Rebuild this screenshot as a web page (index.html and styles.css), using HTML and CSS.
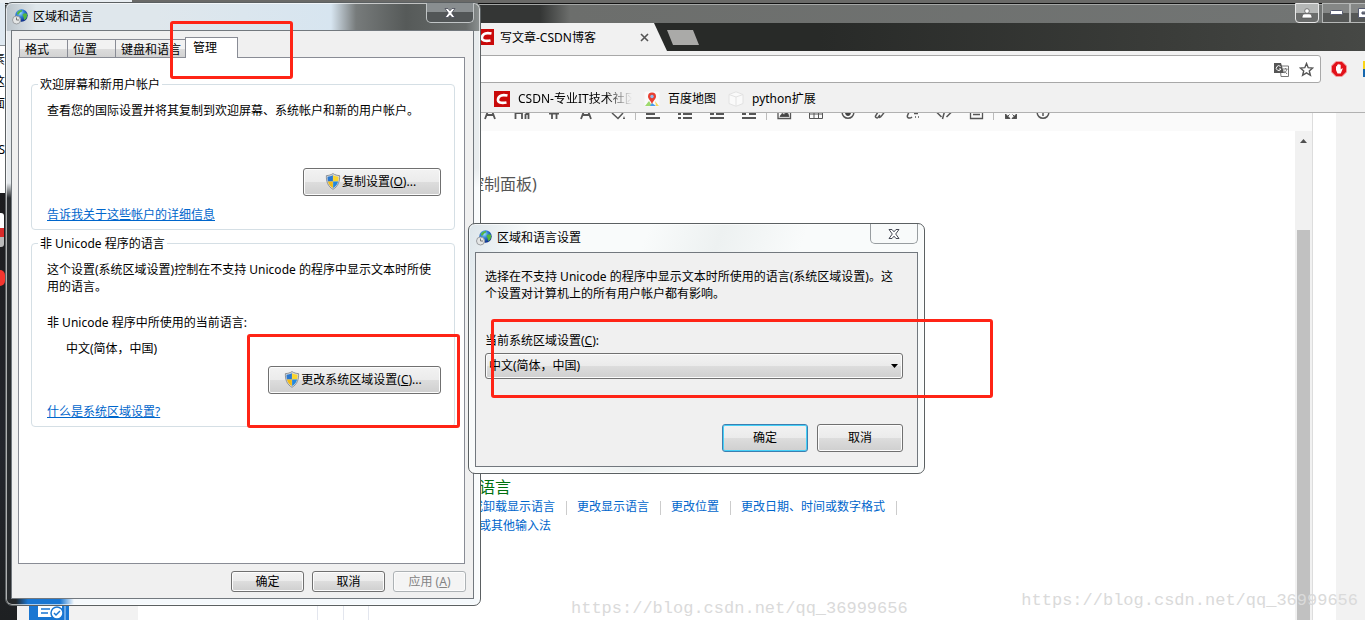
FILE: index.html
```html
<!DOCTYPE html>
<html lang="zh-CN">
<head>
<meta charset="utf-8">
<title>区域和语言</title>
<link rel="stylesheet" href="styles.css">
</head>
<body>
<svg class="defs" width="0" height="0" aria-hidden="true">
  <defs>
    <radialGradient id="ball" cx="40%" cy="30%" r="70%">
      <stop offset="0" stop-color="#9fe0ff"/><stop offset=".45" stop-color="#2f7fd6"/><stop offset="1" stop-color="#0b2a86"/>
    </radialGradient>
    <symbol id="globe" viewBox="0 0 16 16">
      <circle cx="9.500" cy="6.500" r="6.200" fill="url(#ball)"/>
      <path d="M5 4c1-2 3-3 5-3 .5 1-.5 2-1.500 2.300S7.500 5 6.500 5.500 5 5 5 4zM11 5c1.500-1 3-1 4 0 .5 2-.5 5-2.500 6-1-1-.5-2-1-3S10 6 11 5z" fill="#52b640"/>
      <circle cx="4.500" cy="11" r="4" fill="#e4e6e6" stroke="#9b9fa2"/>
      <path d="M4.500 8.500V11H7" fill="none" stroke="#777"/>
    </symbol>
    <symbol id="shield" viewBox="0 0 16 17">
      <path d="M8 .6c2 1.300 4.200 1.900 6.600 2 .3 6-1.600 11-6.600 13.700C3 13.600 1.100 8.600 1.400 2.600 3.800 2.500 6 1.900 8 .6z" fill="#d8dde0" stroke="#84898d" stroke-width=".9"/>
      <path d="M7.900 2.300v6.200H2.900c-.3-1.500-.4-3-.4-4.700 2-.1 3.800-.6 5.400-1.500z" fill="#2b78cf"/>
      <path d="M8.100 2.300c1.600.9 3.400 1.400 5.400 1.500 0 1.700-.1 3.200-.4 4.700h-5z" fill="#fbd52c"/>
      <path d="M2.900 8.500h5v6.400c-2.700-1.500-4.300-3.700-5-6.400z" fill="#f3bb13"/>
      <path d="M13.100 8.500h-5v6.400c2.700-1.500 4.300-3.700 5-6.400z" fill="#2388dd"/>
    </symbol>
    <symbol id="csdn" viewBox="0 0 16 16">
      <path d="M0 0h16v16H0z" fill="#c90a0a"/>
      <path d="M13.500 4.600C9 3.600 4.700 4 4 8.200c-.5 3.300 3 4.300 8.500 3.300" fill="none" stroke="#fff" stroke-width="2.600"/>
    </symbol>
  </defs>
</svg>

<main class="desktop">
  <section class="browser">
    <header class="titlebar">
      <div class="controls">
        <button class="ctl user" aria-label="用户"><svg width="12" height="11" viewBox="0 0 12 11"><circle cx="6" cy="3" r="2.300" fill="#fff" stroke="#555" stroke-width=".7"/><path d="M1 10c0-3 1-4.200 3-4.200h4c2 0 3 1.200 3 4.200z" fill="#fff" stroke="#555" stroke-width=".7"/></svg></button>
        <button class="ctl" aria-label="最小化"><svg width="13" height="6" viewBox="0 0 13 6"><rect x=".5" y=".5" width="12" height="4" rx="1" fill="#fff" stroke="#555a70"/></svg></button>
        <button class="ctl" aria-label="最大化"><svg width="13" height="10" viewBox="0 0 13 10"><path d="M.5.5h12v9H.5zM4 4v2h5V4z" fill="#fff" fill-rule="evenodd" stroke="#555a70"/></svg></button>
      </div>
    </header>
    <div class="tabs-row">
      <div class="page-tab">
        <svg width="16" height="16"><use href="#csdn"/></svg>
        <span>写文章-CSDN博客</span>
        <button class="tab-close" aria-label="关闭标签页"><svg width="9" height="9" viewBox="0 0 9 9"><path d="M1 1l7 7M8 1L1 8" stroke="#555" stroke-width="1.600"/></svg></button>
      </div>
      <button class="new-tab" aria-label="新标签页"></button>
    </div>
    <div class="address-row">
      <div class="address">
        <input class="url" type="text" aria-label="网址">
        <svg width="15" height="15" viewBox="0 0 15 15"><path d="M6 4h8.500v10.500H7z" fill="#fff" stroke="#777"/><path d="M0 1h7l3 10H0z" fill="#555"/><path d="M6.500 4.500A2.400 2.400 0 1 0 7 7H5" fill="none" stroke="#fff"/><path d="M9 7h4.500M11.500 6v1M13 7c-.5 2-1.500 3-3 4M10 8.500l3 3.500" fill="none" stroke="#777"/></svg>
        <svg width="15" height="15" viewBox="0 0 15 15"><path d="M7.500 1.500l1.700 4.200 4.500.3-3.400 2.900 1.100 4.400-3.900-2.400-3.900 2.400 1.100-4.400L1.300 6l4.500-.3z" fill="none" stroke="#555" stroke-width="1.400"/></svg>
      </div>
      <div class="extensions">
        <svg width="16" height="16" viewBox="0 0 16 16"><path d="M5 .5h6L15.500 5v6L11 15.500H5L.5 11V5z" fill="#e2121a" stroke="#f39a9a"/><path d="M5 9V5.500q.6-.8 1.100 0V4q.6-.8 1.200 0v-.800q.6-.8 1.200 0V4q.6-.8 1.200 0v4.500l1.500-1.200q1 .2.300 1L9.800 12.500H6.500z" fill="#fff"/></svg>
        <svg width="16" height="16" viewBox="0 0 16 16"><path d="M0 0h16v8H0z" fill="#f9d418"/><path d="M0 8h16v8H0z" fill="#1667ae"/></svg>
      </div>
    </div>
    <nav class="bookmarks">
      <a href="#" class="bookmark"><svg width="16" height="16"><use href="#csdn"/></svg><span class="fade">CSDN-专业IT技术社区</span></a>
      <a href="#" class="bookmark"><svg width="16" height="16" viewBox="0 0 16 16"><rect x=".5" y=".5" width="15" height="15" rx="2" fill="#fafafa"/><path d="M1 15l4-5 3 5z" fill="#9dd96c"/><path d="M6 15l2-3 4 3z" fill="#459bee"/><path d="M11 10l4 5h-3z" fill="#f5d85e"/><path d="M8 13C7 10 4 8 4 5.500a4 4 0 0 1 8 0C12 8 9 10 8 13z" fill="#e83f32"/><circle cx="8" cy="5.500" r="1.700" fill="#8fc1f1"/></svg><span>百度地图</span></a>
      <a href="#" class="bookmark"><svg width="16" height="16" viewBox="0 0 16 16"><path d="M8 .8l7 2.700v9L8 15.300 1 12.500v-9z" fill="#fafafa" stroke="#e2e2e2"/><path d="M1 3.500l7 2.500 7-2.500M8 6v9" fill="none" stroke="#e2e2e2"/></svg><span>python扩展</span></a>
    </nav>
    <div class="viewport">
      <aside class="rail">
        <div class="rail-light"></div>
        <div class="rail-dark"><i class="rail-card"></i><i class="rail-dot"></i></div>
      </aside>
      <aside class="sidebar">
        <svg width="40" height="34" viewBox="0 0 40 34"><path d="M0 0h40v34H0z" fill="#1976d2"/><path d="M9 0h24v31H9z" fill="#fff"/><path d="M12 19h9M12 23h9M12 27h7" stroke="#1976d2" stroke-width="1.500"/><circle cx="28" cy="27" r="6" fill="#fff" stroke="#1976d2" stroke-width="1.500"/><path d="M25 27l2 2 4-4" fill="none" stroke="#1976d2" stroke-width="1.500"/><path d="M36 0v34" stroke="#6aa9e8" stroke-width="2"/></svg>
      </aside>
      <div class="drafts"><i></i><i></i><i></i></div>
      <div class="editor">
        <div class="editor-tools">
          <span class="tool"><svg viewBox="0 0 16 16"><path d="M3 15L7.500 3h1L13 15M5 11h6"/></svg></span>
          <span class="tool"><svg viewBox="0 0 16 16"><path d="M1.500 3v12M8 3v12M1.500 9H8M11.500 15V10M14.500 15v-5h-3"/></svg></span>
          <span class="tool"><svg viewBox="0 0 16 16"><path d="M3 9.500h10M6 9.500V15M10.500 7v8"/></svg></span>
          <span class="tool"><svg viewBox="0 0 16 16"><path d="M3 15L7.500 3h1L13 15M5 11h6"/></svg></span>
          <span class="tool"><svg viewBox="0 0 16 16"><path d="M2 9l6 5.500L13 9" stroke-width="1.500"/><path d="M14 12l-1 3h2z" fill="#444" stroke="none"/></svg></span>
          <i class="sep"></i>
          <span class="tool"><svg viewBox="0 0 16 16"><path d="M1 6h14M1 10h9M1 14h14"/></svg></span>
          <span class="tool"><svg viewBox="0 0 16 16"><path d="M1 10h3M6 10h9M1 14h3M6 14h9"/></svg></span>
          <span class="tool"><svg viewBox="0 0 16 16"><path d="M1 10h4M7 10h8M1 14h14"/></svg></span>
          <span class="tool"><svg viewBox="0 0 16 16"><path d="M1 14h14M8 10h7M1 10h4"/></svg></span>
          <i class="sep"></i>
          <span class="tool"><svg viewBox="0 0 16 16"><path d="M2 4h12.500v10.500H2z" stroke-width="1.300"/><path d="M4 12.500l2-3 2 1 3-3 2 5z" fill="#444" stroke-width="1"/></svg></span>
          <span class="tool"><svg viewBox="0 0 16 16"><path d="M1.500 4h13v10.500h-13zM1.500 10h13M6 4v10M10.500 4v10" stroke-width="1"/></svg></span>
          <span class="tool"><svg viewBox="0 0 16 16"><circle cx="8" cy="8.500" r="5.800" stroke-width="1.500"/><path d="M5 9h6c-.5 2-1.500 3-3 3S5.500 11 5 9z" fill="#444" stroke="none"/></svg></span>
          <span class="tool"><svg viewBox="0 0 16 16"><path d="M8 11l-2 2.500c-1 1-3 0-2.500-1.500L6 8M7 13.500c2 0 3-2 5-5" stroke-width="1.500"/></svg></span>
          <span class="tool"><svg viewBox="0 0 16 16"><path d="M8 13c-2 2-5.500 1-4.500-1.500L5 8M10 9.500h4M11 13h1M14 13h1" stroke-width="1.500"/></svg></span>
          <span class="tool"><svg viewBox="0 0 16 16"><path d="M5.500 5L1.500 9l4 4M10.500 5l4 4-4 4M9.500 4l-3 11" stroke-width="1.500"/></svg></span>
          <span class="tool"><svg viewBox="0 0 16 16"><path d="M2.500 2h12v12.500h-12zM5 10.500h7" stroke-width="1.300"/></svg></span>
          <i class="sep"></i>
          <span class="tool"><svg viewBox="0 0 16 16"><path d="M2.500 10v4.500H7zM13.500 10v4.500H9zM2.500 14.500l4-4M13.500 14.500l-4-4" fill="#444" stroke-width="1"/></svg></span>
          <span class="tool"><svg viewBox="0 0 16 16"><circle cx="8" cy="8.500" r="5.800" stroke-width="1.500"/><path d="M8 6v6" stroke-width="1.500"/></svg></span>
        </div>
        <div class="editor-body">
          <article class="article">
            <p class="crumb">控制面板)</p>
            <h2 class="topic">语言</h2>
            <div class="links"><a href="#">或卸载显示语言</a><a href="#">更改显示语言</a><a href="#">更改位置</a><a href="#">更改日期、时间或数字格式</a></div>
            <div class="links second"><a href="#">或其他输入法</a></div>
          </article>
          <div class="scroll"><svg width="7" height="4" viewBox="0 0 7 4"><path d="M0 4L3.500 0 7 4z" fill="#505050"/></svg><i class="thumb"></i></div>
        </div>
      </div>
      <div class="gutter"></div>
    </div>
  </section>

  <aside class="edge"><span>素</span><span>这</span><span>面</span><span class="code">S</span></aside>

  <section class="window region" aria-label="区域和语言">
    <header class="caption">
      <svg width="16" height="16"><use href="#globe"/></svg><h1>区域和语言</h1>
      <button class="close dark" aria-label="关闭"><svg width="12" height="10" viewBox="0 0 12 10"><path d="M1 .5h3l2 2.300L8 .5h3L7.700 5 11 9.500H8L6 7.200 4 9.500H1L4.300 5z" fill="#fff" stroke="#454854" stroke-width=".8"/></svg></button>
    </header>
    <div class="client">
      <div class="tabs" role="tablist">
        <button role="tab" class="tab">格式</button><button role="tab" class="tab">位置</button><button role="tab" class="tab wide">键盘和语言</button><button role="tab" class="tab active" aria-selected="true">管理</button>
      </div>
      <div class="panel">
        <fieldset class="group">
          <legend>欢迎屏幕和新用户帐户</legend>
          <p>查看您的国际设置并将其复制到欢迎屏幕、系统帐户和新的用户帐户。</p>
          <button class="btn action copy"><svg width="16" height="17"><use href="#shield"/></svg><span>复制设置(<u>O</u>)...</span></button>
          <a href="#" class="help">告诉我关于这些帐户的详细信息</a>
        </fieldset>
        <fieldset class="group">
          <legend>非 Unicode 程序的语言</legend>
          <p>这个设置(系统区域设置)控制在不支持 Unicode 的程序中显示文本时所使用的语言。</p>
          <p class="current">非 Unicode 程序中所使用的当前语言:</p>
          <p class="value">中文(简体，中国)</p>
          <button class="btn action change"><svg width="16" height="17"><use href="#shield"/></svg><span>更改系统区域设置(<u>C</u>)...</span></button>
          <a href="#" class="help">什么是系统区域设置?</a>
        </fieldset>
      </div>
      <footer class="footer"><button class="btn">确定</button><button class="btn">取消</button><button class="btn" disabled>应用 (<u>A</u>)</button></footer>
    </div>
  </section>

  <section class="window locale" aria-label="区域和语言设置">
    <header class="caption">
      <svg width="16" height="16"><use href="#globe"/></svg><h1>区域和语言设置</h1>
      <button class="close" aria-label="关闭"><svg width="12" height="10" viewBox="0 0 12 10"><path d="M1 .5h3l2 2.300L8 .5h3L7.700 5 11 9.500H8L6 7.200 4 9.500H1L4.300 5z" fill="#fff" stroke="#454854"/></svg></button>
    </header>
    <div class="client">
      <p>选择在不支持 Unicode 的程序中显示文本时所使用的语言(系统区域设置)。这个设置对计算机上的所有用户帐户都有影响。</p>
      <label for="locale">当前系统区域设置(<u>C</u>):</label>
      <div class="combo">
        <select id="locale"><option>中文(简体，中国)</option></select>
        <svg class="arrow" width="7" height="4" viewBox="0 0 7 4"><path d="M0 0h7L3.500 4z"/></svg>
      </div>
      <footer class="footer"><button class="btn primary">确定</button><button class="btn">取消</button></footer>
    </div>
  </section>

  <i class="mark mark-tab"></i>
  <i class="mark mark-change"></i>
  <i class="mark mark-combo"></i>
  <span class="watermark first">https://blog.csdn.net/qq_36999656</span>
  <span class="watermark last">https://blog.csdn.net/qq_36999656</span>
</main>
</body>
</html>
```
FILE: styles.css
```css
* { box-sizing: border-box; }
body { margin: 0; font: 12px/17px "Noto Sans", "Noto Sans CJK SC", sans-serif; color: #000; }
button, input, select { font: inherit; color: inherit; margin: 0; padding: 0; }
p, h1, h2 { margin: 0; font-size: 12px; font-weight: 400; }
a { color: #0066cc; }
svg { display: block; flex: none; }
i { display: block; }
.defs { position: absolute; }
.desktop { position: relative; height: 100vh; overflow: hidden; }

/* Browser in the background */
.browser { display: flex; flex-direction: column; height: 100%; background: #f1f1f1; }
.titlebar { display: flex; justify-content: flex-end; height: 23px; padding-top: 3px; background: linear-gradient(90deg, #e9eef2 132px, transparent 132px) top / 100% 3px no-repeat, linear-gradient(#6a6a68 0 3px, #111 3px 4px, #a5a7a6 4px 5px, transparent 5px), linear-gradient(90deg, #343635 0 540px, #6c6e6c 570px, #727574); }
.controls { display: flex; align-items: flex-start; margin-right: -13px; }
.ctl { display: grid; place-items: center; width: 28px; height: 20px; border: 1px solid #b5b7b6; background: linear-gradient(#858786 50%, #555756 50%); }
.ctl.user { width: 24px; margin-right: 3px; border-color: #e8e8e8; border-radius: 0 0 4px 4px; background: linear-gradient(#b5b7b6 50%, #6b6d6c 50%); }
.tabs-row { display: flex; height: 28px; padding-left: 470px; background: linear-gradient(90deg, #282a28 0 60%, #3a3c39 85%, #464845); }
.page-tab { display: flex; align-items: center; gap: 6px; width: 197px; padding: 0 18px 0 8px; background: #f1f1f1; clip-path: polygon(0 0, 184px 0, 100% 100%, 0 100%); }
.tab-close { margin-left: auto; border: 0; background: none; }
.new-tab { width: 32px; height: 15px; margin-top: 7px; border: 0; background: #aaaaa8; clip-path: polygon(0 0, 26px 0, 100% 100%, 6px 100%); }
.address-row { display: flex; align-items: center; gap: 10px; height: 36px; }
.address { display: flex; flex: 1; align-items: center; gap: 10px; height: 28px; padding-right: 6px; border: 1px solid #a8a8a8; border-radius: 3px; background: #fff; }
.url { flex: 1; height: 24px; border: 0; outline: 0; }
.extensions { display: flex; gap: 16px; width: 34px; overflow: hidden; }
.bookmarks { display: flex; align-items: center; gap: 12px; height: 26px; padding: 0 0 2px 494px; border-bottom: 1px solid #b1b1b1; }
.bookmark { display: flex; align-items: center; gap: 8px; height: 17px; color: #000; text-decoration: none; }
.fade { width: 114px; overflow: hidden; white-space: nowrap; -webkit-mask-image: linear-gradient(90deg, #000 88px, transparent); mask-image: linear-gradient(90deg, #000 88px, transparent); }
.viewport { display: flex; flex: 1; min-height: 0; }
.rail { display: flex; flex-direction: column; width: 17px; background: #fff; }
.rail-light { height: 80px; }
.rail-dark { flex: 1; padding-top: 20px; background: linear-gradient(#1c1c1e, #23252c 60%, #1e2022); }
.rail-card { width: 4px; height: 34px; border-radius: 0 3px 3px 0; background: linear-gradient(#fff 15px, #d92b2b 15px 24px, #bbb 24px); }
.rail-dot { width: 5px; height: 16px; margin-top: 23px; border-radius: 0 6px 6px 0; background: #f5352f; }
.edge { position: absolute; top: 3px; left: 0; display: flex; flex-direction: column; align-items: flex-end; width: 5px; height: 155px; padding-top: 46px; overflow: hidden; background: linear-gradient(#dfe9f1 42px, #8b9298 42px 43px, #fff 43px); }
.edge span { line-height: 22px; }
.edge .code { margin-top: 24px; }
.sidebar { display: flex; align-items: flex-end; width: 121px; padding-left: 12px; background: #f2f2f2; }
.drafts { display: flex; gap: 25px; width: 231px; padding-left: 179px; background: #fff; }
.drafts i { width: 1px; background: #e3e6ee; }
.editor { display: flex; flex: 1; flex-direction: column; min-width: 0; border-right: 1px solid #ddd; background: #fff; }
.editor-tools { display: flex; height: 18px; padding-left: 105px; overflow: hidden; background: #fafafa; }
.tool { width: 32px; }
.tool svg { width: 16px; height: 16px; margin: -9px auto 0; fill: none; stroke: #555; stroke-width: 1.8px; }
.sep { width: 1px; height: 7px; margin: 0 1px; background: #bbb; }
.editor-body { display: flex; flex: 1; min-height: 0; }
.article { flex: 1; padding: 42px 0 0 99px; }
.crumb { font-size: 16px; line-height: 22px; color: #555; }
.topic { margin: 282px 0 0 11px; font-size: 16px; line-height: 20px; color: #00700f; }
.links { display: flex; align-items: center; margin-left: 3px; line-height: 19px; }
.links.second { margin-left: 11px; }
.links a { text-decoration: none; white-space: nowrap; }
.links:not(.second) a::after { content: ""; display: inline-block; width: 1px; height: 14px; margin: 0 10px 0 11px; background: #ccc; vertical-align: middle; }
.scroll { display: flex; flex-direction: column; align-items: center; width: 17px; padding-top: 8px; background: #f1f1f1; }
.thumb { width: 13px; flex: 1; margin-top: 87px; background: #c1c1c1; }
.gutter { width: 52px; border-left: 23px solid #fff; background: #f2f2f2; }

/* Dialog windows */
.window { position: absolute; border: 1px solid #5b6062; border-radius: 7px; box-shadow: inset 0 0 0 1px #ffffffa0; }
.caption { display: flex; align-items: center; gap: 5px; padding-left: 1px; }
.close { display: grid; place-items: center; align-self: flex-start; width: 48px; height: 20px; margin-left: auto; border: 1px solid #989da0; border-top: 0; border-radius: 0 0 5px 5px; background: #f8fafa; }
.close.dark { border-color: #c1c5c6; background: linear-gradient(#898e90 50%, #525657 50%); }
.client { border: 1px solid #72787e; background: #f0f0f0; }
.region { top: 2px; left: 5px; width: 476px; padding: 0 6px 6px 5px; background:
  linear-gradient(90deg, #25282a 0 10px, #1976d2 22px 54px, #f5f9fc 68px) bottom / 100% 6px no-repeat,
  linear-gradient(90deg, #b9c2c9, #dfe7ec 30px 150px, #d7e5f0 325px, #777b7b 350px, #565a59 400px, #686c6b 460px, #8d9292) top / 100% 28px no-repeat,
  linear-gradient(#e8ecee 165px, #f9fbfc 185px) right / 7px 100% no-repeat,
  linear-gradient(#e6eaed 180px, #292c2f 195px); }
.region .caption { height: 27px; }
.region .client { padding: 6px 8px 6px 6px; }
.tabs { display: flex; align-items: flex-end; height: 20px; padding-left: 1px; }
.tab { width: 48px; height: 18px; padding: 1px 0 0 5px; border: 1px solid #898c95; border-right: 0; border-bottom: 0; background: linear-gradient(#f2f2f2 50%, #ddd 50%, #d2d2d2); text-align: left; line-height: 15px; white-space: nowrap; }
.tab.wide { width: 70px; }
.tab.active { width: 53px; height: 21px; margin-bottom: -1px; padding: 0 0 2px 7px; border-right: 1px solid #898c95; background: #fff; z-index: 1; }
.panel { display: flex; flex-direction: column; gap: 4px; min-height: 507px; padding: 17px 9px 0 12px; border: 1px solid #898c95; background: #fff; }
.group { display: flex; flex-direction: column; min-width: 0; margin: 0; padding: 8px 13px 6px 15px; border: 1px solid #d5dfe5; border-radius: 4px; }
.group legend { margin-left: -9px; padding: 0 2px; line-height: 19px; }
.current { margin-top: 19px; }
.value { margin: 9px 0 0 19px; }
.help { align-self: flex-start; margin-top: 9px; }
.btn { display: flex; align-items: center; justify-content: center; height: 28px; border: 1px solid #707070; border-radius: 3px; background: linear-gradient(#f2f2f2, #ebebeb 50%, #dddddd 50%, #cfcfcf); box-shadow: inset 0 0 0 1px #fcfcfc; }
.action { align-self: flex-end; width: 138px; gap: 1px; padding: 0 3px 1px 0; }
.copy { margin-top: 49px; }
.copy + .help { margin-top: 10px; }
.change { width: 173px; margin-top: 9px; }
.btn:disabled { border-color: #adb2b5; background: #f4f4f4; color: #838383; }
.footer { display: flex; justify-content: flex-end; gap: 8px; }
.region .footer { margin: 7px -1px 0 0; }
.region .footer .btn { width: 73px; height: 21px; }
.locale { top: 223px; left: 468px; width: 457px; padding: 0 6px 6px; background: linear-gradient(110deg, #dce5ea, #f9fbfb 60px 170px, #edf1f1 240px, #f9fbfb 320px); }
.locale .caption { height: 28px; padding-bottom: 1px; }
.locale .client { padding: 15px 14px 14px 9px; }
.locale label { display: block; margin-top: 30px; }
.combo { position: relative; margin-top: 4px; }
.combo select { display: block; width: 100%; height: 26px; padding: 0 20px 1px 3px; border: 1px solid #707070; border-radius: 3px; appearance: none; background: linear-gradient(#f2f2f2, #ebebeb 50%, #dddddd 50%, #cfcfcf); box-shadow: inset 0 0 0 1px #fcfcfc; }
.arrow { position: absolute; right: 5px; top: 11px; pointer-events: none; }
.locale .footer { gap: 9px; margin-top: 45px; }
.locale .btn { width: 86px; padding-bottom: 1px; }
.btn.primary { border-color: #3c7fb1; box-shadow: inset 0 0 0 1px #46d0f7; }

/* Annotations */
.mark { position: absolute; border: 3px solid #ff2416; border-radius: 3px; pointer-events: none; }
.mark-tab { left: 170px; top: 21px; width: 123px; height: 58px; }
.mark-change { left: 247px; top: 334px; width: 213px; height: 94px; }
.mark-combo { left: 491px; top: 319px; width: 502px; height: 79px; }
.watermark { position: absolute; font: 17px/20px "Liberation Mono", monospace; color: #dadada; }
.watermark.first { left: 571px; bottom: 1px; }
.watermark.last { right: 7px; bottom: 9px; }
```
